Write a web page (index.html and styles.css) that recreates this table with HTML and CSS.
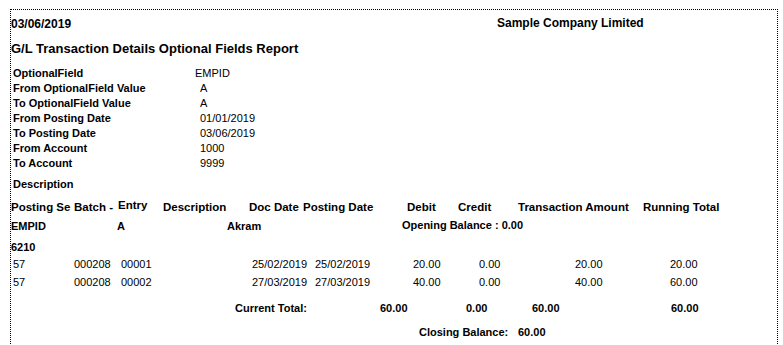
FILE: index.html
```html
<!DOCTYPE html>
<html lang="en">
<head>
<meta charset="utf-8">
<title>G/L Transaction Details Optional Fields Report</title>
<link rel="stylesheet" href="styles.css">
</head>
<body>
<div class="page">
  <div class="top-row">
    <span class="run-date">03/06/2019</span>
    <span class="company">Sample Company Limited</span>
  </div>
  <h1 class="title">G/L Transaction Details Optional Fields Report</h1>
  <dl class="params">
    <dt>OptionalField</dt><dd class="shift">EMPID</dd>
    <dt>From OptionalField Value</dt><dd>A</dd>
    <dt>To OptionalField Value</dt><dd>A</dd>
    <dt>From Posting Date</dt><dd>01/01/2019</dd>
    <dt>To Posting Date</dt><dd>03/06/2019</dd>
    <dt>From Account</dt><dd>1000</dd>
    <dt>To Account</dt><dd>9999</dd>
  </dl>
  <div class="desc-label">Description</div>

  <div class="row head">
    <span>Posting Se</span>
    <span>Batch -</span>
    <span class="raised">Entry</span>
    <span>Description</span>
    <span>Doc Date</span>
    <span>Posting Date</span>
    <span>Debit</span>
    <span>Credit</span>
    <span>Transaction Amount</span>
    <span>Running Total</span>
  </div>

  <div class="row group">
    <span>EMPID</span>
    <span>A</span>
    <span>Akram</span>
    <span class="lift">Opening Balance : 0.00</span>
  </div>

  <div class="acct">6210</div>

  <div class="row detail">
    <span class="seq">57</span>
    <span>000208</span>
    <span>00001</span>
    <span>25/02/2019</span>
    <span>25/02/2019</span>
    <span>20.00</span>
    <span>0.00</span>
    <span>20.00</span>
    <span>20.00</span>
  </div>
  <div class="row detail">
    <span class="seq">57</span>
    <span>000208</span>
    <span>00002</span>
    <span>27/03/2019</span>
    <span>27/03/2019</span>
    <span>40.00</span>
    <span>0.00</span>
    <span>40.00</span>
    <span>60.00</span>
  </div>

  <div class="row total">
    <span>Current Total:</span>
    <span>60.00</span>
    <span>0.00</span>
    <span>60.00</span>
    <span>60.00</span>
  </div>

  <div class="row closing">
    <span>Closing Balance:</span>
    <span>60.00</span>
  </div>
</div>
</body>
</html>
```
FILE: styles.css
```css
html, body {
  margin: 0;
  padding: 0;
  overflow: hidden;
  background: #ffffff;
}

body {
  font-family: "Liberation Sans", Arial, sans-serif;
  color: #000000;
  font-size: 11px;
}

.page {
  margin: 9px 0 0 10px;
  width: 766px;
  min-height: 420px;
  border: 1px dotted #000000;
  border-bottom: none;
}

.top-row {
  display: flex;
  margin-top: 6px;
  height: 15px;
  font-size: 12px;
  font-weight: bold;
  line-height: 14px;
  white-space: nowrap;
}

.run-date {
  width: 486px;
  padding-top: 1px;
}

.title {
  margin: 10px 0 0 0;
  font-size: 13px;
  font-weight: bold;
  line-height: 16px;
  white-space: nowrap;
}

.params {
  display: grid;
  grid-template-columns: 189px auto;
  margin: 9px 0 0 0;
  line-height: 15px;
}

.params dt {
  padding-left: 2px;
  font-weight: bold;
  white-space: nowrap;
}

.params dd {
  margin: 0;
  white-space: nowrap;
}

.params dd.shift {
  margin-left: -5px;
}

.desc-label {
  margin-top: 6px;
  padding-left: 2px;
  font-weight: bold;
  line-height: 15px;
}

.row {
  display: grid;
  white-space: nowrap;
}

.head {
  margin-top: 8px;
  font-size: 11.5px;
  font-weight: bold;
  line-height: 14px;
  grid-template-columns: 63px 44px 45px 86px 54px 104px 51px 60px 125px auto;
}

.raised {
  margin-top: -2px;
}

.group {
  margin-top: 5px;
  font-weight: bold;
  line-height: 15px;
  grid-template-columns: 106px 110px 174px auto;
}

.lift {
  margin-top: -1px;
  padding-left: 1px;
}

.acct {
  margin-top: 6px;
  font-weight: bold;
  line-height: 15px;
}

.detail {
  line-height: 18px;
  grid-template-columns: 63px 47px 131px 63px 98px 66px 96px 95px auto;
}

.detail .seq {
  padding-left: 2px;
}

.total {
  margin-top: 10px;
  padding-left: 224px;
  font-weight: bold;
  line-height: 15px;
  grid-template-columns: 145px 86px 66px 139px auto;
}

.closing {
  margin-top: 9px;
  padding-left: 408px;
  font-weight: bold;
  line-height: 15px;
  grid-template-columns: 99px auto;
}
```
